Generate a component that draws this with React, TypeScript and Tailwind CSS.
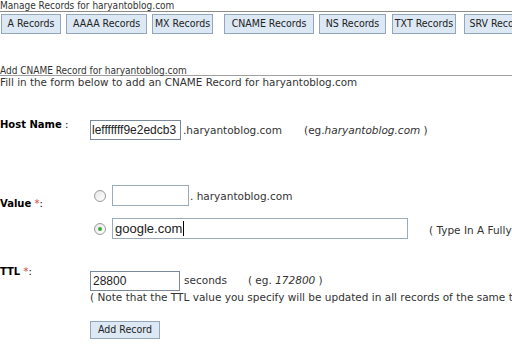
const tabs = [
  { label: 'A Records', cls: 'ml-[1px] w-[60px]' },
  { label: 'AAAA Records', cls: 'ml-[5px] w-[81px]' },
  { label: 'MX Records', cls: 'ml-[5px] w-[61px]' },
  { label: 'CNAME Records', cls: 'ml-[11px] w-[90px]' },
  { label: 'NS Records', cls: 'ml-[5px] w-[67px]' },
  { label: 'TXT Records', cls: 'ml-[6px] w-[64px]' },
  { label: 'SRV Records', cls: 'ml-[8px] w-[70px]' },
];

const ui = { fontFamily: '"DejaVu Sans Condensed", "DejaVu Sans", sans-serif' };
const body = { fontFamily: '"DejaVu Sans", Verdana, sans-serif' };
const field = { fontFamily: '"Liberation Sans", Arial, sans-serif' };

function Radio({ checked }: { checked?: boolean }) {
  return (
    <span className="flex h-[12px] w-[12px] shrink-0 items-center justify-center rounded-full border border-[#9a9a9a] bg-gradient-to-br from-[#e6e6e6] to-white">
      {checked && <span className="h-[4px] w-[4px] rounded-full bg-[#3aa83a]" />}
    </span>
  );
}

export default function App() {
  return (
    <div className="h-[352px] w-[512px] overflow-hidden whitespace-nowrap bg-white text-[#333]" style={body}>
      {/* top header */}
      <div className="h-[12px] border-b border-[#8a8a8a] pt-[1px] text-[10px] leading-[10px]" style={ui}>
        Manage Records for haryantoblog.com
      </div>

      <div className="mt-[2px] flex">
        {tabs.map((t) => (
          <div
            key={t.label}
            className={`flex h-[20px] shrink-0 items-center justify-center border border-[#94a6bc] bg-[#dce8f4] text-[10.5px] text-[#222] ${t.cls}`}
            style={ui}
          >
            {t.label}
          </div>
        ))}
      </div>

      <div className="mt-[32px] h-[10px] border-b border-[#a0a0a0] text-[10px] leading-[9px]" style={ui}>
        Add CNAME Record for haryantoblog.com
      </div>
      <div className="text-[10.4px] leading-[12px]">
        Fill in the form below to add an CNAME Record for haryantoblog.com
      </div>

      {/* host name */}
      <div className="mt-[32px] flex items-start">
        <div className="w-[90px] shrink-0 text-[10px] leading-[10px] text-black">
          <span className="font-bold">Host Name</span> :
        </div>
        <div className="flex items-baseline text-[10.5px]">
          <div className="h-[20px] w-[91px] shrink-0 overflow-hidden border border-[#7a8a9a] px-[1px] text-[12px] leading-[18px] text-[#222]" style={field}>
            lefffffff9e2edcb3
          </div>
          <span className="ml-[2px]">.haryantoblog.com</span>
          <span className="ml-[22px]">
            (eg.<i>haryantoblog.com</i> )
          </span>
        </div>
      </div>

      {/* value */}
      <div className="mt-[45px] flex items-start">
        <div className="w-[90px] shrink-0 pt-[14px] text-[10px] leading-[10px] text-black">
          <span className="font-bold">Value</span> <span className="text-[#d04040]">*</span>:
        </div>
        <div className="flex flex-col gap-[12px] text-[10.5px]">
          <div className="flex items-center">
            <span className="ml-[4px]"><Radio /></span>
            <div className="ml-[6px] h-[21px] w-[77px] shrink-0 border border-[#9aabbb]" />
            <span className="ml-[1px] mt-[3px]">. haryantoblog.com</span>
          </div>
          <div className="flex items-center">
            <span className="ml-[4px]"><Radio checked /></span>
            <div className="ml-[6px] flex h-[21px] w-[296px] shrink-0 items-center border border-[#9aabbb] px-[2px] text-[13px] text-[#222]" style={field}>
              google.com<span className="ml-[1px] h-[15px] w-[1px] bg-black" />
            </div>
            <span className="ml-[21px] mt-[4px]">( Type In A Fully Qualified Domain Name )</span>
          </div>
        </div>
      </div>

      {/* ttl */}
      <div className="mt-[28px] flex items-start">
        <div className="w-[90px] shrink-0 text-[10px] leading-[10px] text-black">
          <span className="font-bold">TTL</span> <span className="text-[#d04040]">*</span>:
        </div>
        <div className="flex flex-col pt-[4px] text-[10.5px]">
          <div className="flex items-center">
            <div className="h-[20px] w-[90px] shrink-0 border border-[#7a8a9a] px-[2px] text-[12px] leading-[18px] text-[#222]" style={field}>
              28800
            </div>
            <span className="ml-[4px]">seconds</span>
            <span className="ml-[21px]">
              ( eg. <i>172800</i> )
            </span>
          </div>
          <div className="leading-[12px]">
            ( Note that the TTL value you specify will be updated in all records of the same type )
          </div>
          <div
            className="mt-[18px] flex h-[18px] w-[70px] items-center justify-center border border-[#94a6bc] bg-[#dce8f4] text-[10.5px] text-[#222]"
            style={ui}
          >
            Add Record
          </div>
        </div>
      </div>
    </div>
  );
}
